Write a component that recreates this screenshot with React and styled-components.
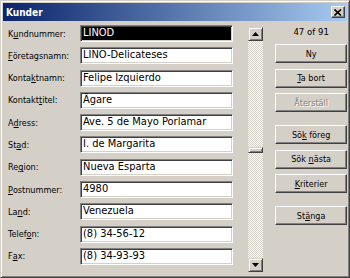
import React from "react";
import styled, { createGlobalStyle } from "styled-components";

const Global = createGlobalStyle`
  html, body { margin: 0; padding: 0; background: #d4d0c8; }
  body { font-family: "DejaVu Sans Condensed", "Liberation Sans", sans-serif; font-size: 9px; }
`;

const FACE = `#d4d0c8`;

const Window = styled.div`
  box-sizing: border-box;
  width: 350px;
  height: 278px;
  background: ${FACE};
  border: 1px solid;
  border-color: ${FACE} #404040 #404040 ${FACE};
  box-shadow: inset 1px 1px #fff, inset -1px -1px #808080;
  padding: 2px;
  display: flex;
  flex-direction: column;
`;

const TitleBar = styled.div`
  height: 18px;
  background: linear-gradient(to right, #0a246a, #a6caf0);
  display: flex;
  align-items: center;
  justify-content: space-between;
  padding: 0 2px 0 3px;
`;

const Title = styled.span`
  color: #fff;
  font-weight: bold;
  font-size: 10px;
`;

const CloseBtn = styled.div`
  box-sizing: border-box;
  width: 14px;
  height: 12px;
  background: ${FACE};
  border: 1px solid;
  border-color: #fff #404040 #404040 #fff;
  box-shadow: inset -1px -1px #808080;
  display: flex;
  align-items: center;
  justify-content: center;
`;

const Body = styled.div`
  flex: 1;
  display: flex;
  align-items: flex-start;
`;

const Form = styled.div`
  display: grid;
  grid-template-columns: 72px 153px;
  grid-auto-rows: 17px;
  row-gap: 5.3px;
  padding: 4px 0 0 5px;
  width: 230px;
`;

const Label = styled.label`
  display: flex;
  align-items: center;
  color: #000;
  font-size: 9px;
  white-space: nowrap;
`;

const Field = styled.div`
  box-sizing: border-box;
  height: 17px;
  border: 1px solid;
  border-color: #808080 #fff #fff #808080;
  box-shadow: inset 1px 1px #404040, inset -1px -1px ${FACE};
  background: ${(p) => (p.$selected ? "#000" : "#fff")};
  color: ${(p) => (p.$selected ? "#fff" : "#000")};
  font-size: 11px;
  padding: 0 2px 2px 2px;
  display: flex;
  align-items: center;
  white-space: nowrap;
  overflow: hidden;
`;

const ScrollBar = styled.div`
  margin: 6px 0 0 11px;
  width: 15px;
  height: 245px;
  display: flex;
  flex-direction: column;
`;

const ArrowBtn = styled.div`
  box-sizing: border-box;
  height: 14px;
  background: ${FACE};
  border: 1px solid;
  border-color: ${FACE} #404040 #404040 ${FACE};
  box-shadow: inset 1px 1px #fff, inset -1px -1px #808080;
  display: flex;
  align-items: center;
  justify-content: center;
`;

const Track = styled.div`
  flex: 1;
  position: relative;
  background-color: #fff;
  background-image: repeating-conic-gradient(${FACE} 0% 25%, #fff 0% 50%);
  background-size: 2px 2px;
`;

const Thumb = styled.div`
  position: absolute;
  left: 0;
  right: 0;
  box-sizing: border-box;
  height: 6px;
  background: ${FACE};
  border: 1px solid;
  border-color: ${FACE} #404040 #404040 ${FACE};
  box-shadow: inset 1px 1px #fff, inset -1px -1px #808080;
`;

const Side = styled.div`
  margin-left: 12px;
  width: 72px;
  display: flex;
  flex-direction: column;
`;

const Counter = styled.div`
  height: 23px;
  line-height: 22px;
  text-align: center;
  font-size: 9.5px;
  color: #000;
`;

const Group = styled.div`
  display: flex;
  flex-direction: column;
  gap: 5.5px;
  margin-bottom: 13px;
`;

const Button = styled.div`
  box-sizing: border-box;
  height: 19px;
  background: ${FACE};
  border: 1px solid;
  border-color: #fff #404040 #404040 #fff;
  box-shadow: inset -1px -1px #808080, inset 1px 1px ${FACE};
  display: flex;
  align-items: center;
  justify-content: center;
  font-size: 9px;
  color: ${(p) => (p.$disabled ? "#808080" : "#000")};
  text-shadow: ${(p) => (p.$disabled ? "1px 1px #fff" : "none")};
`;

const fields = [
  [<>K<u>u</u>ndnummer:</>, "LINOD", true],
  [<><u>F</u>öretagsnamn:</>, "LINO-Delicateses"],
  [<>Konta<u>k</u>tnamn:</>, "Felipe Izquierdo"],
  [<>Kontakt<u>t</u>itel:</>, "Ägare"],
  [<>A<u>d</u>ress:</>, "Ave. 5 de Mayo Porlamar"],
  [<>St<u>a</u>d:</>, "I. de Margarita"],
  [<>Re<u>g</u>ion:</>, "Nueva Esparta"],
  [<><u>P</u>ostnummer:</>, "4980"],
  [<>La<u>n</u>d:</>, "Venezuela"],
  [<>Telef<u>o</u>n:</>, "(8) 34-56-12"],
  [<>F<u>a</u>x:</>, "(8) 34-93-93"],
];

const Arrow = ({ up }) => (
  <svg width="7" height="4" viewBox="0 0 7 4">
    <polygon points={up ? "3.5,0 7,4 0,4" : "0,0 7,0 3.5,4"} fill="#000" />
  </svg>
);

export default function App() {
  const current = 47;
  const total = 91;
  const trackH = 217;
  const thumbTop = Math.round(((current - 1) / (total - 1)) * (trackH - 6)) - 2;
  return (
    <>
      <Global />
      <Window>
        <TitleBar>
          <Title>Kunder</Title>
          <CloseBtn>
            <svg width="8" height="7" viewBox="0 0 8 7">
              <path d="M0.5 0.5 L7 6.5 M7 0.5 L0.5 6.5" stroke="#000" strokeWidth="1.6" />
            </svg>
          </CloseBtn>
        </TitleBar>
        <Body>
          <Form>
            {fields.map(([label, value, sel], i) => (
              <React.Fragment key={i}>
                <Label>{label}</Label>
                <Field $selected={sel}>{value}</Field>
              </React.Fragment>
            ))}
          </Form>
          <ScrollBar>
            <ArrowBtn><Arrow up /></ArrowBtn>
            <Track>
              <Thumb style={{ top: thumbTop }} />
            </Track>
            <ArrowBtn><Arrow /></ArrowBtn>
          </ScrollBar>
          <Side>
            <Counter>{current} of {total}</Counter>
            <Group>
              <Button>Ny</Button>
              <Button><span><u>T</u>a bort</span></Button>
              <Button $disabled>Återställ</Button>
            </Group>
            <Group>
              <Button><span>Sö<u>k</u> föreg</span></Button>
              <Button><span>Sök <u>n</u>ästa</span></Button>
              <Button><span><u>K</u>riterier</span></Button>
            </Group>
            <Group>
              <Button><span>St<u>ä</u>nga</span></Button>
            </Group>
          </Side>
        </Body>
      </Window>
    </>
  );
}
